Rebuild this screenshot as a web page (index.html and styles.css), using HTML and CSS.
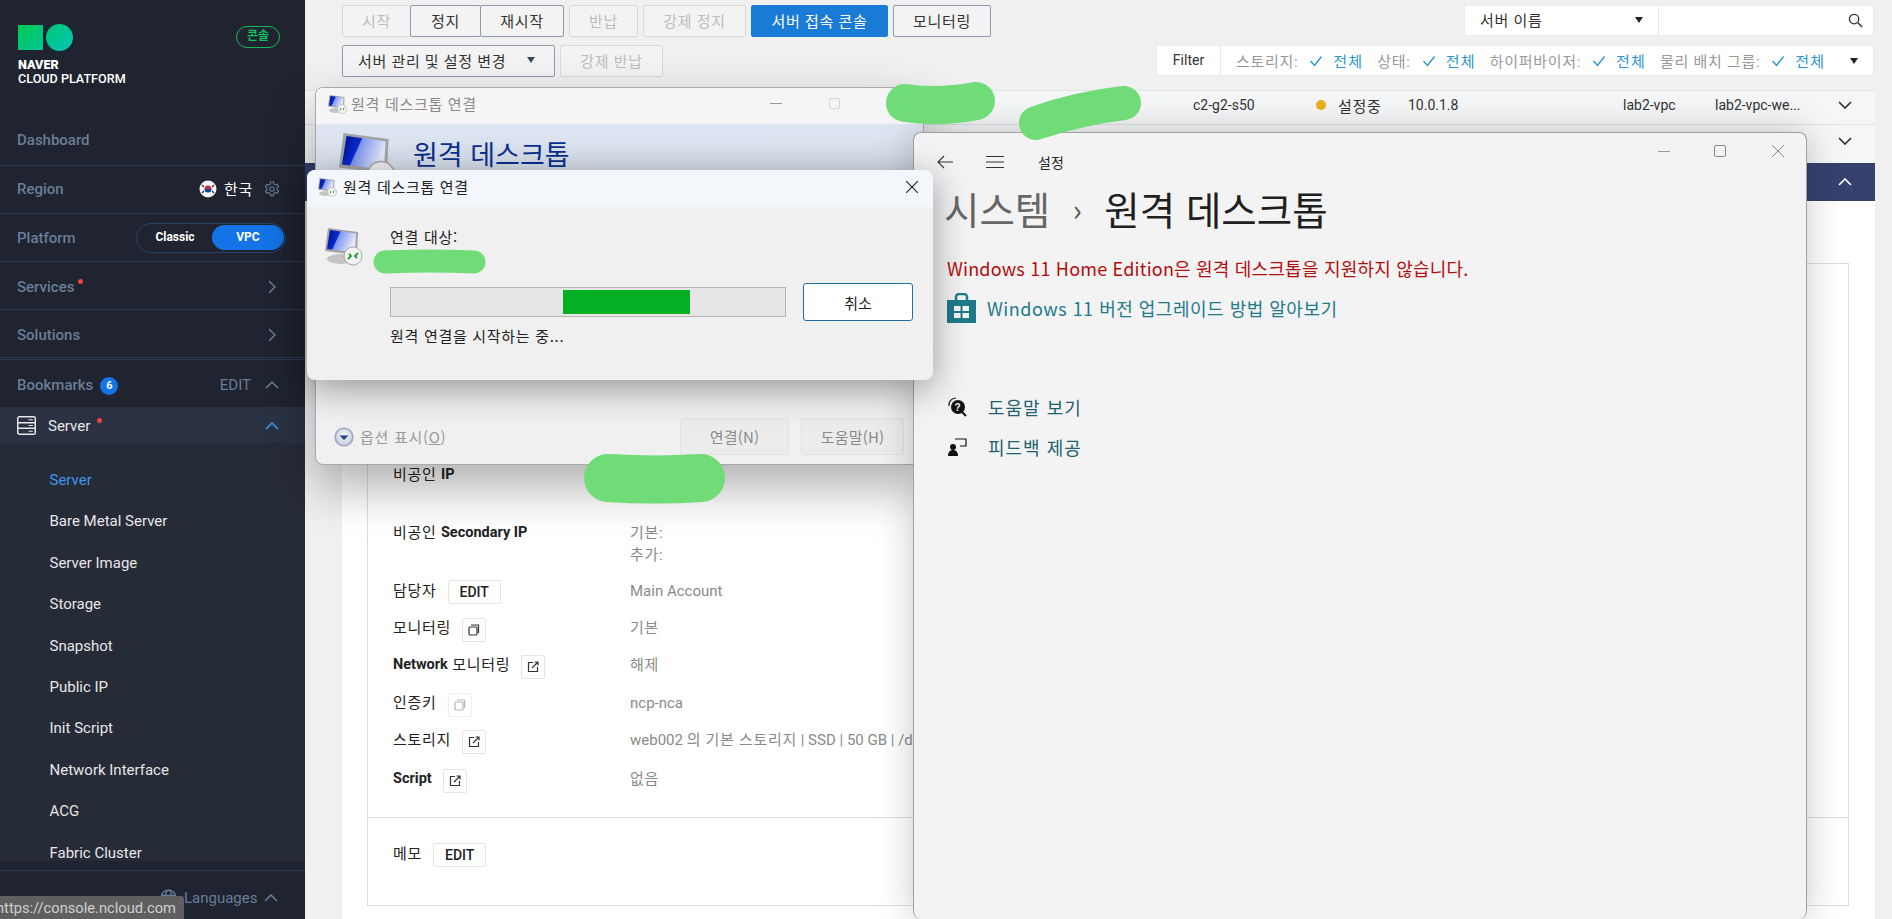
FILE: index.html
```html
<!DOCTYPE html>
<html lang="ko">

<head>
    <meta charset="UTF-8">
    <title>Server - NAVER CLOUD PLATFORM</title>
    <link rel="stylesheet" href="styles.css">
</head>

<body>
<svg class="defs" width="0" height="0">
    <defs>
        <linearGradient id="screenFill" x1="0" y1="0" x2="1" y2="0.35">
            <stop offset="0" stop-color="#00108c"/>
            <stop offset="0.42" stop-color="#0a2ad0"/>
            <stop offset="0.45" stop-color="#7f95ee"/>
            <stop offset="1" stop-color="#e4e9fb"/>
        </linearGradient>
        <radialGradient id="optFill" cx="0.5" cy="0.4" r="0.6">
            <stop offset="0" stop-color="#f4f6fb"/>
            <stop offset="1" stop-color="#c4cede"/>
        </radialGradient>
        <symbol id="rdp" viewBox="0 0 40 40">
            <ellipse cx="18" cy="33" rx="14" ry="5" fill="#c4c4c4"/>
            <path d="M5 2l30 4-1 23-32-4z" fill="#a3a3a3"/>
            <path d="M7 4l26 3.500-1 19-28-3.500z" fill="url(#screenFill)"/>
            <circle cx="30" cy="30" r="9" fill="#f2f2f2" stroke="#a8a8a8"/>
            <path d="M25 33l3-3-2-2M35 27l-3 3 2 2" fill="none" stroke="#1d9a3a" stroke-width="1.800"/>
        </symbol>
        <symbol id="ic-copy" viewBox="0 0 12 12">
            <rect x="1" y="3" width="8" height="8" rx="1" fill="none" stroke="currentColor" stroke-width="1.200"/>
            <path d="M3 1h7.500v8" fill="none" stroke="currentColor" stroke-width="1.200"/>
        </symbol>
        <symbol id="ic-open" viewBox="0 0 12 12">
            <path d="M6 1.500H1.500v9h9V6" fill="none" stroke="currentColor" stroke-width="1.200"/>
            <path d="M5 7l5.500-5.500M7.500 1h3.500v3.500" fill="none" stroke="currentColor" stroke-width="1.200"/>
        </symbol>
        <symbol id="ic-check" viewBox="0 0 14 12">
            <path d="M1.500 6l4 4.500L12.500 1.500" fill="none" stroke="currentColor" stroke-width="1.400"/>
        </symbol>
        <symbol id="ic-chev" viewBox="0 0 14 8">
            <path d="M1 1l6 6 6-6" fill="none" stroke="currentColor" stroke-width="1.700"/>
        </symbol>
    </defs>
</svg>

<div class="page">
    <aside class="sidebar">
        <div class="brand">
            <div class="logo">
                <div class="logo-mark"><span class="logo-square"></span><span class="logo-circle"></span></div>
                <div class="logo-name"><b>NAVER</b><br>CLOUD PLATFORM</div>
            </div>
            <span class="console-badge">콘솔</span>
        </div>
        <div class="side-row first">Dashboard</div>
        <div class="side-row region-row">
            <span>Region</span>
            <span class="region">
                <svg class="flag" viewBox="0 0 18 18">
                    <circle cx="9" cy="9" r="8.500" fill="#f4f4f4"/>
                    <path d="M5.500 9a3.500 3.500 0 0 1 7 0z" fill="#cd2e3a"/>
                    <path d="M5.500 9a3.500 3.500 0 0 0 7 0z" fill="#0047a0"/>
                    <path d="M3 5l2 2M15 5l-2 2M3 13l2-2M15 13l-2-2" stroke="#333" stroke-width="1.200"/>
                </svg>
                <span class="region-name">한국</span>
                <svg class="gear" viewBox="0 0 16 16">
                    <path d="M6.600 1h2.800l.4 2 1.500.9 1.900-.7 1.400 2.400-1.500 1.300v1.800l1.500 1.300-1.400 2.400-1.900-.7-1.500.9-.4 2H6.600l-.4-2-1.500-.9-1.900.7-1.400-2.400 1.500-1.300V7.100L1.400 5.800l1.400-2.400 1.900.7 1.500-.9z" fill="none" stroke="currentColor" stroke-width="1.100"/>
                    <circle cx="8" cy="8" r="2.200" fill="none" stroke="currentColor" stroke-width="1.100"/>
                </svg>
            </span>
        </div>
        <div class="side-row">
            <span>Platform</span>
            <div class="platform">
                <span class="platform-item">Classic</span>
                <span class="platform-item on">VPC</span>
            </div>
        </div>
        <div class="side-row low">
            <span>Services<i class="dot"></i></span>
            <svg class="chev-right" viewBox="0 0 8 14"><path d="M1 1l6 6-6 6" fill="none" stroke="currentColor" stroke-width="1.500"/></svg>
        </div>
        <div class="side-row double low">
            <span>Solutions</span>
            <svg class="chev-right" viewBox="0 0 8 14"><path d="M1 1l6 6-6 6" fill="none" stroke="currentColor" stroke-width="1.500"/></svg>
        </div>
        <div class="side-row bookmarks">
            <span>Bookmarks<em class="count">6</em></span>
            <span class="edit-wrap">EDIT<svg class="chev-up" viewBox="0 0 14 8"><path d="M1 7l6-6 6 6" fill="none" stroke="currentColor" stroke-width="1.500"/></svg></span>
        </div>
        <div class="server-row">
            <svg class="server-icon" viewBox="0 0 18 18">
                <rect x="0.700" y="0.700" width="16.600" height="16.600" rx="1.500" fill="none" stroke="#e8e8e8" stroke-width="1.400"/>
                <path d="M1 6.300h16M1 11.700h16" stroke="#e8e8e8" stroke-width="1.400"/>
                <path d="M11 3.500h4M11 9h4M11 14.500h4" stroke="#e8e8e8"/>
            </svg>
            <span class="server-name">Server<i class="dot"></i></span>
            <svg class="chev-up blue" viewBox="0 0 14 8"><path d="M1 7l6-6 6 6" fill="none" stroke="currentColor" stroke-width="1.700"/></svg>
        </div>
        <ul class="submenu">
            <li class="active">Server</li>
            <li>Bare Metal Server</li>
            <li>Server Image</li>
            <li>Storage</li>
            <li>Snapshot</li>
            <li>Public IP</li>
            <li>Init Script</li>
            <li>Network Interface</li>
            <li>ACG</li>
            <li>Fabric Cluster</li>
        </ul>
        <div class="side-foot">
            <svg class="globe" viewBox="0 0 16 16">
                <circle cx="8" cy="8" r="7" fill="none" stroke="currentColor" stroke-width="1.200"/>
                <ellipse cx="8" cy="8" rx="3" ry="7" fill="none" stroke="currentColor" stroke-width="1.200"/>
                <path d="M1 6h14M1 10h14" stroke="currentColor" stroke-width="1.200"/>
            </svg>
            <span>Languages</span>
            <svg class="chev-up" viewBox="0 0 14 8"><path d="M1 7l6-6 6 6" fill="none" stroke="currentColor" stroke-width="1.500"/></svg>
        </div>
    </aside>

    <main class="main">
        <div class="toolbar">
            <div class="actions">
                <div class="btn-line">
                    <div class="btn-group">
                        <button class="btn off w68">시작</button>
                        <button class="btn w70">정지</button>
                        <button class="btn w83">재시작</button>
                    </div>
                    <button class="btn off w69">반납</button>
                    <button class="btn off w102">강제 정지</button>
                    <button class="btn primary w137">서버 접속 콘솔</button>
                    <button class="btn w98">모니터링</button>
                </div>
                <div class="btn-line">
                    <button class="btn drop">서버 관리 및 설정 변경<i class="tri"></i></button>
                    <button class="btn off w103">강제 반납</button>
                </div>
            </div>
            <div class="search-side">
                <div class="searchbox">
                    <div class="search-select"><span class="ko">서버 이름</span><i class="tri dark"></i></div>
                    <div class="search-input">
                        <svg viewBox="0 0 16 16"><circle cx="6.500" cy="6.500" r="5" fill="none" stroke="#333" stroke-width="1.400"/><path d="M10.500 10.500l4.500 4.500" stroke="#333" stroke-width="1.600"/></svg>
                    </div>
                </div>
                <div class="filter">
                    <div class="filter-title">Filter</div>
                    <div class="filter-body">
                        <span class="f-label ko">스토리지:</span><svg class="f-check"><use href="#ic-check"/></svg><span class="f-val ko">전체</span>
                        <span class="f-label ko">상태:</span><svg class="f-check"><use href="#ic-check"/></svg><span class="f-val ko">전체</span>
                        <span class="f-label ko">하이퍼바이저:</span><svg class="f-check"><use href="#ic-check"/></svg><span class="f-val ko">전체</span>
                        <span class="f-label ko">물리 배치 그룹:</span><svg class="f-check"><use href="#ic-check"/></svg><span class="f-val ko">전체</span>
                        <i class="tri dark"></i>
                    </div>
                </div>
            </div>
        </div>

        <div class="list-row first-row">
            <span class="c-spec">c2-g2-s50</span>
            <span class="c-status"><i class="status-dot"></i><span class="ko">설정중</span></span>
            <span class="c-ip">10.0.1.8</span>
            <span class="c-vpc">lab2-vpc</span>
            <span class="c-subnet">lab2-vpc-we...</span>
            <svg class="row-chev"><use href="#ic-chev"/></svg>
        </div>
        <div class="list-row">
            <svg class="row-chev"><use href="#ic-chev"/></svg>
        </div>
        <div class="list-row selected">
            <svg class="row-chev up"><use href="#ic-chev"/></svg>
        </div>

        <section class="detail">
            <div class="detail-box">
                <div class="info-row tall"><div class="info-label"><span class="ko">비공인&nbsp;</span><b>IP</b></div></div>
                <div class="info-row tall">
                    <div class="info-label"><span class="ko">비공인&nbsp;</span><b>Secondary IP</b></div>
                    <div class="info-value ko">기본:<br>추가:</div>
                </div>
                <div class="info-row">
                    <div class="info-label"><span class="ko">담당자</span><button class="mini">EDIT</button></div>
                    <div class="info-value">Main Account</div>
                </div>
                <div class="info-row">
                    <div class="info-label"><span class="ko">모니터링</span><button class="mini icon"><svg><use href="#ic-copy"/></svg></button></div>
                    <div class="info-value ko">기본</div>
                </div>
                <div class="info-row row-38">
                    <div class="info-label"><b>Network</b><span class="ko">&nbsp;모니터링</span><button class="mini icon"><svg><use href="#ic-open"/></svg></button></div>
                    <div class="info-value ko">해제</div>
                </div>
                <div class="info-row">
                    <div class="info-label"><span class="ko">인증키</span><button class="mini icon faded"><svg><use href="#ic-copy"/></svg></button></div>
                    <div class="info-value">ncp-nca</div>
                </div>
                <div class="info-row row-39">
                    <div class="info-label"><span class="ko">스토리지</span><button class="mini icon"><svg><use href="#ic-open"/></svg></button></div>
                    <div class="info-value">web002 <span class="ko">의 기본 스토리지</span> | SSD | 50 GB | /dev/xvda</div>
                </div>
                <div class="info-row script">
                    <div class="info-label"><b>Script</b><button class="mini icon"><svg><use href="#ic-open"/></svg></button></div>
                    <div class="info-value ko">없음</div>
                </div>
                <div class="memo">
                    <div class="info-label"><span class="ko">메모</span><button class="mini">EDIT</button></div>
                </div>
            </div>
        </section>
    </main>
</div>

<!-- 윈도우 창들 -->
<div class="win win-back">
    <div class="win-title">
        <svg class="rdp-small"><use href="#rdp"/></svg>
        <span>원격 데스크톱 연결</span>
        <span class="back-min"></span>
        <span class="back-max"></span>
    </div>
    <div class="back-head">
        <svg class="rdp-large"><use href="#rdp"/></svg>
        <span class="back-heading">원격 데스크톱</span>
    </div>
    <div class="back-foot">
        <span class="options">
            <svg class="opt-round" viewBox="0 0 20 20">
                <circle cx="10" cy="10" r="8.800" fill="url(#optFill)" stroke="#9aa6bd" stroke-width="1.600"/>
                <path d="M5.500 8.500h9L10 13z" fill="#24408e"/>
            </svg>
            <span>옵션 표시(<u>O</u>)</span>
        </span>
        <button class="win-btn w109">연결(N)</button>
        <button class="win-btn w103">도움말(H)</button>
    </div>
</div>

<div class="win win-settings">
    <div class="set-controls">
        <span class="set-min"></span>
        <span class="set-max"></span>
        <svg class="set-close" viewBox="0 0 12 12"><path d="M0 0l12 12M12 0L0 12" stroke="#888"/></svg>
    </div>
    <div class="set-nav">
        <svg class="set-back" viewBox="0 0 16 14"><path d="M7 1L1 7l6 6M1 7h15" fill="none" stroke="#333" stroke-width="1.100"/></svg>
        <svg class="set-menu" viewBox="0 0 18 14"><path d="M0 1.500h18M0 7h18M0 12.500h18" stroke="#333" stroke-width="1.100"/></svg>
        <span>설정</span>
    </div>
    <h1 class="set-title"><span class="crumb">시스템</span><i class="crumb-sep">›</i><span>원격 데스크톱</span></h1>
    <p class="set-warn">Windows 11 Home Edition은 원격 데스크톱을 지원하지 않습니다.</p>
    <div class="set-link">
        <svg class="store" viewBox="0 0 29 30">
            <path d="M9 8V4a3 3 0 0 1 3-3h5a3 3 0 0 1 3 3v4" fill="none" stroke="#1f7a8c" stroke-width="2.500"/>
            <path d="M0 7h29v23H0z" fill="#1f7a8c"/>
            <path d="M7 13h6.500v5H7zM15.500 13H22v5h-6.500zM7 20h6.500v5H7zM15.500 20H22v5h-6.500z" fill="#f3f3f3"/>
        </svg>
        <span>Windows 11 버전 업그레이드 방법 알아보기</span>
    </div>
    <div class="set-help">
        <svg viewBox="0 0 20 20"><path d="M2 9a7 7 0 0 1 7-8" fill="none" stroke="#111" stroke-width="1.200"/><circle cx="11" cy="10" r="7" fill="#111"/><path d="M15 15l4 4" stroke="#111" stroke-width="2"/><text x="11" y="14" font-size="10" font-weight="700" fill="#f3f3f3" text-anchor="middle" font-family="Liberation Sans">?</text></svg>
        <span>도움말 보기</span>
    </div>
    <div class="set-help">
        <svg viewBox="0 0 20 20"><circle cx="6" cy="10" r="3" fill="#111"/><path d="M1 19c0-4 2-6 5-6s5 2 5 6z" fill="#111"/><path d="M8 2h11v7h-6" fill="none" stroke="#111" stroke-width="1.200"/></svg>
        <span>피드백 제공</span>
    </div>
</div>

<div class="win win-front">
    <div class="front-title">
        <svg class="rdp-small"><use href="#rdp"/></svg>
        <span>원격 데스크톱 연결</span>
        <svg class="front-close" viewBox="0 0 12 12"><path d="M0 0l12 12M12 0L0 12" stroke="#222" stroke-width="1.100"/></svg>
    </div>
    <div class="front-body">
        <svg class="rdp-mid"><use href="#rdp"/></svg>
        <div class="front-content">
            <div class="front-target">연결 대상:</div>
            <div class="progress-line">
                <div class="progress"><div class="progress-chunk"></div></div>
                <button class="cancel">취소</button>
            </div>
            <div class="front-msg">원격 연결을 시작하는 중...</div>
        </div>
    </div>
</div>

<!-- 가림 표시 -->
<svg class="scribbles" viewBox="0 0 1892 919">
    <path class="s1" d="M905 103Q940 108 976 101"/>
    <path class="s2" d="M1036 123Q1080 108 1124 103"/>
    <path class="s3" d="M385 262Q430 260 474 262"/>
    <path class="s4" d="M608 478Q655 481 701 478"/>
</svg>

<div class="statusbar">https://console.ncloud.com</div>
</body>
</html>
```
FILE: styles.css
```css
* {
    box-sizing: border-box;
}

html, body {
    margin: 0;
    height: 919px;
    overflow: hidden;
}

body {
    position: relative;
    font-family: Roboto, "Noto Sans CJK KR", sans-serif;
    font-size: 14px;
    color: #333;
    background-color: #f0f0f0;
}

button {
    font-family: inherit;
}

/* 한글은 폭이 좁게 나와서 자간으로 맞춤 */
.ko {
    font-size: 15px;
    letter-spacing: .7px;
}

.defs {
    position: absolute;
}

.page {
    display: flex;
    height: 919px;
}

/* sidebar */
.sidebar {
    width: 305px;
    flex: none;
    display: flex;
    flex-direction: column;
    background-color: #1f2430;
    color: #6a7d99;
    font-size: 15px;
    font-weight: 500;
}

.brand {
    height: 113px;
    padding: 24px 25px 0 18px;
    display: flex;
    justify-content: space-between;
    align-items: flex-start;
}

.logo-mark {
    display: flex;
    align-items: center;
    gap: 3px;
    height: 27px;
}

.logo-square {
    width: 25px;
    height: 25px;
    background: linear-gradient(135deg, #00c853, #00c795);
}

.logo-circle {
    width: 27px;
    height: 27px;
    border-radius: 50%;
    background: linear-gradient(135deg, #00c870, #00c4b8);
}

.logo-name {
    margin-top: 7px;
    font-size: 12.600px;
    line-height: 13.500px;
    color: #fff;
}

.logo-name b {
    font-weight: 900;
}

.console-badge {
    margin-top: 2px;
    width: 44px;
    height: 22px;
    border: 1.500px solid #14b85a;
    border-radius: 11px;
    color: #14c060;
    font-size: 12px;
    font-weight: 700;
    line-height: 18px;
    text-align: center;
}

.side-row {
    height: 48px;
    padding: 0 26px 0 17px;
    display: flex;
    justify-content: space-between;
    align-items: center;
    border-bottom: 1px solid #2d3a50;
}

.side-row.first {
    height: 53px;
    padding-top: 2px;
}

.side-row.region-row {
    padding-bottom: 2px;
}

.side-row.low {
    padding-top: 2px;
}

.side-row.double {
    height: 50px;
    border-bottom: 3px double #2d3a50;
}

.side-row.bookmarks {
    height: 47px;
    padding-top: 3px;
    border-bottom: 0;
}

.region {
    display: flex;
    align-items: center;
    font-weight: 400;
    margin-right: -1px;
}

.flag {
    width: 18px;
    height: 18px;
}

.region-name {
    margin-left: 7px;
    color: #fff;
    font-size: 15px;
    letter-spacing: .7px;
}

.gear {
    margin-left: 11px;
    width: 16px;
    height: 16px;
}

.platform {
    width: 150px;
    height: 30px;
    margin-right: -7px;
    padding: 1px;
    border: 1px solid #24436d;
    border-radius: 15px;
    display: flex;
}

.platform-item {
    width: 75px;
    color: #fff;
    font-size: 12px;
    font-weight: 700;
    line-height: 25px;
    text-align: center;
}

.platform-item.on {
    width: 73px;
    height: 25px;
    border-radius: 13px;
    background-color: #1473e6;
}

.dot {
    display: inline-block;
    width: 5px;
    height: 5px;
    margin-left: 4px;
    border-radius: 50%;
    background-color: #e8483a;
    vertical-align: 8px;
}

.chev-right {
    width: 8px;
    height: 14px;
    margin-right: 3px;
}

.chev-up {
    width: 14px;
    height: 8px;
}

.count {
    display: inline-block;
    width: 18px;
    height: 18px;
    margin-left: 7px;
    border-radius: 50%;
    background-color: #1473e6;
    color: #fff;
    font-size: 11px;
    font-style: normal;
    font-weight: 700;
    line-height: 18px;
    text-align: center;
    vertical-align: 1px;
}

.edit-wrap {
    display: flex;
    align-items: center;
    gap: 14px;
    font-weight: 400;
}

.server-row {
    height: 36px;
    padding: 1px 26px 0 17px;
    display: flex;
    align-items: center;
    background-color: #2a3142;
    color: #e8e8e8;
    font-weight: 400;
}

.server-icon {
    width: 19px;
    height: 19px;
}

.server-name {
    flex: 1;
    margin-left: 12px;
}

.server-name .dot {
    margin-left: 7px;
}

.chev-up.blue {
    color: #3b8fe8;
}

.submenu {
    height: 418px;
    margin: 0;
    padding: 17px 0 0 49.500px;
    list-style: none;
    overflow: hidden;
    background-color: #262b38;
    color: #e6e6e6;
    font-size: 15px;
    font-weight: 400;
}

.submenu li {
    height: 41.400px;
    line-height: 41.400px;
}

.submenu .active {
    color: #3f95ea;
}

.side-foot {
    flex: 1;
    margin-top: 9px;
    padding: 18px 0 0 160px;
    display: flex;
    align-items: flex-start;
    border-top: 1px solid #2d3a50;
    font-weight: 400;
}

.globe {
    width: 17px;
    height: 17px;
}

.side-foot span {
    margin-left: 7px;
    line-height: 18px;
}

.side-foot .chev-up {
    margin: 5px 0 0 6px;
}

.statusbar {
    position: absolute;
    left: -12px;
    bottom: 0;
    height: 23px;
    padding: 0 8px;
    border-top-right-radius: 3px;
    background-color: #5f5f5f;
    color: #cfcfcf;
    font-size: 14.700px;
    line-height: 24px;
}

/* main */
.main {
    flex: 1;
    min-width: 0;
    display: flex;
    flex-direction: column;
    padding-top: 5px;
}

.toolbar {
    height: 85px;
    flex: none;
    padding: 0 18px 0 37px;
    display: flex;
    justify-content: space-between;
}

.btn-line {
    display: flex;
    gap: 5px;
    margin-bottom: 8px;
}

.btn-group {
    display: flex;
}

.btn-group .btn + .btn {
    margin-left: -1px;
}

.btn {
    height: 32px;
    padding: 0 0 2px;
    border: 1px solid #8c9bb0;
    border-radius: 2px;
    background-color: #f3f3f3;
    color: #333;
    font-size: 15px;
    letter-spacing: .7px;
}

.btn.off {
    border-color: #d8d8d8;
    color: #bdbdbd;
}

.btn.primary {
    border-color: #1a7bd6;
    background-color: #1a7bd6;
    color: #fff;
}

.btn.drop {
    width: 213px;
    padding: 0 19px 2px 15px;
    display: flex;
    justify-content: space-between;
    align-items: center;
}

.tri {
    display: inline-block;
    width: 0;
    height: 0;
    border-style: solid;
    border-width: 6px 4.500px 0;
    border-color: #3d4a5c transparent transparent;
}

.tri.dark {
    border-color: #222 transparent transparent;
}

.w68 { width: 69px; }
.w70 { width: 71px; }
.w83 { width: 84px; }
.w69 { width: 69px; }
.w98 { width: 98px; }
.w102 { width: 103px; }
.w103 { width: 103px; }
.w109 { width: 109px; }
.w137 { width: 137px; }

.search-side {
    display: flex;
    flex-direction: column;
    align-items: flex-end;
    gap: 9px;
}

.searchbox {
    width: 410px;
    height: 31px;
    display: flex;
    background-color: #fff;
    border: 1px solid #ececec;
}

.search-select {
    width: 194px;
    padding: 0 15px 2px;
    display: flex;
    justify-content: space-between;
    align-items: center;
    border-right: 1px solid #e6e6e6;
    color: #333;
}

.search-input {
    flex: 1;
    padding-right: 10px;
    display: flex;
    justify-content: flex-end;
    align-items: center;
}

.search-input svg {
    width: 15px;
    height: 15px;
}

.filter {
    width: 718px;
    height: 31px;
    display: flex;
    background-color: #fff;
    border: 1px solid #ececec;
}

.filter-title {
    width: 64px;
    border-right: 1px solid #e6e6e6;
    color: #333;
    line-height: 29px;
    text-align: center;
}

.filter-body {
    flex: 1;
    padding-left: 15px;
    display: flex;
    align-items: center;
    white-space: nowrap;
}

.f-label {
    color: #999;
}

.f-check {
    width: 14px;
    height: 12px;
    margin: 0 10px 0 11px;
    color: #2b96d2;
}

.f-val {
    margin-right: 14px;
    color: #2b96d2;
    letter-spacing: 1.200px;
}

.filter-body .tri {
    margin-left: 11px;
}

.list-row {
    position: relative;
    width: 1570px;
    height: 39px;
    flex: none;
    display: flex;
    align-items: center;
    background-color: #f5f6f8;
    border-top: 1px solid #e0e2e6;
    font-size: 14px;
}

.list-row.first-row {
    height: 34px;
    padding-bottom: 5px;
}

.list-row.selected {
    height: 38px;
    border-top: 0;
    background-color: #36426e;
    color: #fff;
}

.c-spec { margin-left: 888px; width: 123px; }
.c-status { width: 92px; display: flex; align-items: center; }
.c-ip { width: 215px; }
.c-vpc { width: 92px; }
.c-subnet { width: 120px; }

.status-dot {
    width: 10px;
    height: 10px;
    margin-right: 12px;
    border-radius: 50%;
    background-color: #eab118;
}

.row-chev {
    position: absolute;
    right: 23px;
    top: 50%;
    width: 14px;
    height: 8px;
    margin-top: -7px;
}

.row-chev.up {
    margin-top: -4px;
    transform: rotate(180deg);
}

.detail {
    flex: 1;
    width: 1533px;
    margin-left: 37px;
    padding: 62px 26px 13px 25px;
    background-color: #fff;
}

.detail-box {
    height: 643px;
    padding: 200px 0 0 25px;
    border: 1px solid #ddd;
}

.info-row {
    height: 37px;
    display: flex;
    align-items: flex-start;
}

.info-row.tall {
    height: 58px;
}

.info-row.row-38 {
    height: 38px;
}

.info-row.row-39 {
    height: 39px;
}

.info-row.script {
    height: 49px;
}

.info-label {
    width: 237px;
    flex: none;
    display: flex;
    align-items: flex-start;
    color: #222;
    font-size: 14px;
    line-height: 22px;
    white-space: pre;
}

.info-label b {
    font-size: 14.500px;
    font-weight: 700;
}

.info-value {
    color: #8a8a8a;
    font-size: 15px;
    line-height: 22px;
    white-space: nowrap;
}

.mini {
    height: 24px;
    margin-left: 11px;
    padding: 0 11px;
    border: 1px solid #e4e4e4;
    border-radius: 2px;
    background-color: #fff;
    color: #222;
    font-size: 14px;
    font-weight: 500;
    line-height: 22px;
}

.mini.icon {
    width: 24px;
    margin-top: 1px;
    padding: 0;
    display: flex;
    justify-content: center;
    align-items: center;
    color: #333;
}

.mini.icon svg {
    width: 12px;
    height: 12px;
}

.mini.faded {
    border-color: #f0f0f0;
    color: #b5b5b5;
}

.memo {
    margin-left: -25px;
    padding: 25px 0 0 25px;
    border-top: 1px solid #ddd;
}

/* windows */
.win {
    position: absolute;
    font-family: "Noto Sans CJK KR", Roboto, sans-serif;
    font-size: 15px;
    letter-spacing: .7px;
}

.win-back {
    left: 315px;
    top: 87px;
    width: 609px;
    height: 378px;
    display: flex;
    flex-direction: column;
    border: 1px solid #a9a9a9;
    border-radius: 8px;
    background-color: #f0f0f0;
    box-shadow: 0 22px 50px rgba(0, 0, 0, .32);
    overflow: hidden;
}

.win-title {
    height: 36px;
    flex: none;
    padding: 0 0 5px 11px;
    display: flex;
    align-items: center;
    background-color: #f5f5f5;
    color: #8a8a8a;
}

.rdp-small {
    width: 20px;
    height: 20px;
    margin-right: 4px;
}

.back-min {
    width: 12px;
    height: 1px;
    margin-left: auto;
    background-color: #999;
}

.back-max {
    width: 11px;
    height: 11px;
    margin: 0 83px 0 47px;
    border: 1px solid #d4d4d4;
    border-radius: 2px;
}

.back-head {
    height: 60px;
    flex: none;
    padding: 6px 0 0 20px;
    display: flex;
    align-items: flex-start;
    overflow: hidden;
    background: linear-gradient(#dde6f2, #d3dbe6);
}

.rdp-large {
    width: 60px;
    height: 60px;
    flex: none;
}

.back-heading {
    margin-left: 17px;
    color: #0b2f8f;
    font-size: 27px;
    letter-spacing: 0;
    line-height: 48px;
}

.back-foot {
    flex: 1;
    padding: 0 19px 9px 18px;
    display: flex;
    justify-content: flex-end;
    align-items: flex-end;
    gap: 12px;
}

.options {
    flex: 1;
    align-self: flex-end;
    display: flex;
    align-items: center;
    height: 37px;
    color: #9a9a9a;
}

.opt-round {
    width: 20px;
    height: 20px;
    margin-right: 6px;
}

.win-btn {
    height: 37px;
    padding: 0;
    border: 1px solid #e2e2e2;
    border-radius: 3px;
    background-color: #ececec;
    color: #8a8a8a;
    font-size: 15px;
    letter-spacing: .2px;
}

.win-settings {
    left: 913px;
    top: 132px;
    width: 894px;
    height: 787px;
    padding: 0 0 0 33px;
    border: 1px solid #a0a0a0;
    border-bottom: 0;
    border-radius: 8px;
    background-color: #f3f3f3;
    box-shadow: 0 0 36px rgba(0, 0, 0, .22);
    color: #222;
    letter-spacing: 0;
}

.set-controls {
    height: 0;
    display: flex;
    justify-content: flex-end;
    align-items: flex-start;
    padding-right: 22px;
}

.set-min {
    width: 12px;
    height: 1px;
    margin-top: 18px;
    background-color: #999;
}

.set-max {
    width: 12px;
    height: 12px;
    margin: 12px 0 0 44px;
    border: 1px solid #8a8a8a;
    border-radius: 2px;
}

.set-close {
    width: 12px;
    height: 12px;
    margin: 12px 0 0 46px;
}

.set-nav {
    height: 52px;
    padding-top: 17px;
    margin-left: -10px;
    display: flex;
    align-items: flex-start;
    font-size: 14px;
    line-height: 24px;
}

.set-back {
    width: 16px;
    height: 14px;
    margin-top: 5px;
}

.set-menu {
    width: 18px;
    height: 14px;
    margin: 5px 34px 0 33px;
}

.set-title {
    height: 46px;
    margin: 0 0 0 -3px;
    display: flex;
    align-items: center;
    font-size: 38.500px;
    font-weight: 400;
    line-height: 46px;
    color: #1f1f1f;
}

.crumb {
    color: #666;
}

.crumb-sep {
    width: 54px;
    color: #555;
    font-size: 30px;
    font-style: normal;
    text-align: center;
}

.set-warn {
    margin: 24px 0 0;
    color: #b30d0d;
    font-size: 18px;
    letter-spacing: .2px;
    line-height: 26px;
}

.set-link {
    margin-top: 12px;
    display: flex;
    align-items: center;
    gap: 11px;
    color: #1f7a8c;
    font-size: 18px;
    letter-spacing: .5px;
}

.store {
    width: 29px;
    height: 30px;
}

.set-help {
    display: flex;
    align-items: center;
    gap: 21px;
    height: 40px;
    color: #1f5f70;
    font-size: 18px;
    letter-spacing: 1px;
}

.set-link + .set-help {
    margin-top: 64px;
}

.set-help svg {
    width: 20px;
    height: 20px;
}

.win-front {
    left: 307px;
    top: 170px;
    width: 626px;
    height: 210px;
    border-radius: 8px;
    background-color: #f0f0f0;
    box-shadow: 0 8px 36px rgba(0, 0, 0, .38);
    color: #222;
    overflow: hidden;
}

.front-title {
    height: 37px;
    padding: 0 0 4px 10px;
    display: flex;
    align-items: center;
    background-color: #f3f6fa;
}

.front-title .rdp-small {
    margin-right: 6px;
}

.front-close {
    width: 12px;
    height: 12px;
    margin-left: auto;
    margin-right: 15px;
}

.front-body {
    padding: 19px 20px 0 16px;
    display: flex;
}

.rdp-mid {
    width: 40px;
    height: 40px;
    flex: none;
}

.front-content {
    flex: 1;
    margin-left: 27px;
}

.front-target {
    height: 57px;
    line-height: 22px;
}

.progress-line {
    display: flex;
    align-items: center;
    justify-content: space-between;
    height: 38px;
}

.progress {
    width: 396px;
    height: 30px;
    padding: 2px 0 2px 172px;
    border: 1px solid #b5b5b5;
    background-color: #e6e6e6;
}

.progress-chunk {
    width: 127px;
    height: 100%;
    background-color: #06b025;
}

.cancel {
    width: 110px;
    height: 38px;
    border: 1px solid #1d6fa8;
    border-radius: 3px;
    background-color: #fff;
    color: #222;
    font-size: 15px;
}

.front-msg {
    margin-top: 3px;
    line-height: 24px;
}

/* scribbles on top */
.scribbles {
    position: absolute;
    left: 0;
    top: 0;
    width: 1892px;
    height: 919px;
    pointer-events: none;
}

.scribbles path {
    fill: none;
    stroke: #6fdc78;
    stroke-linecap: round;
}

.s1 { stroke-width: 38px; }
.s2 { stroke-width: 34px; }
.s3 { stroke-width: 23px; }
.s4 { stroke-width: 48px; }
```
